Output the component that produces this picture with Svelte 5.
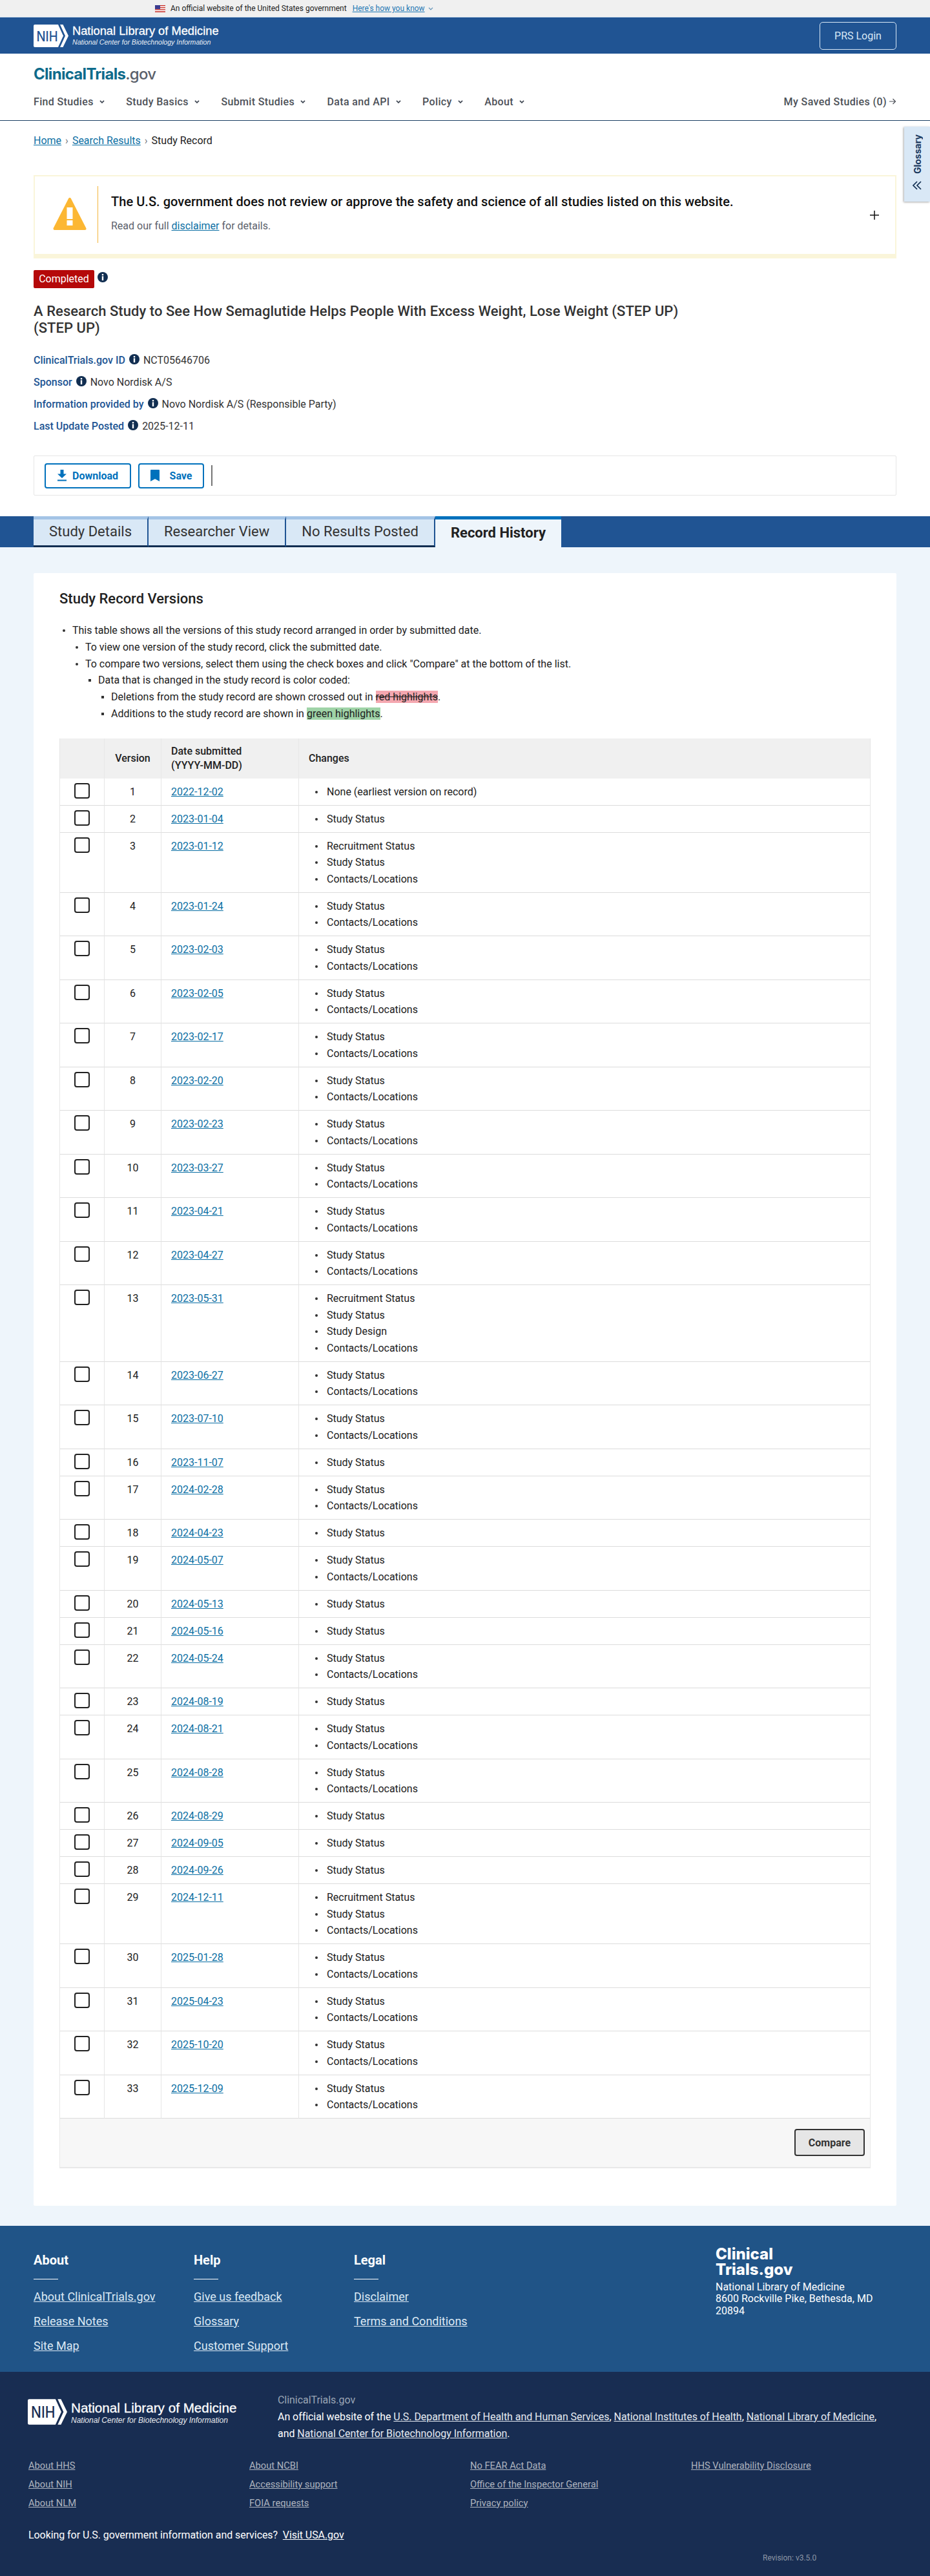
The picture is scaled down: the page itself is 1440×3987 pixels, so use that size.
<script>
  const SS = 'Study Status', CL = 'Contacts/Locations', RS = 'Recruitment Status', SD = 'Study Design';
  const rows = [
    ['2022-12-02', ['None (earliest version on record)']],
    ['2023-01-04', [SS]],
    ['2023-01-12', [RS, SS, CL]],
    ['2023-01-24', [SS, CL]],
    ['2023-02-03', [SS, CL]],
    ['2023-02-05', [SS, CL]],
    ['2023-02-17', [SS, CL]],
    ['2023-02-20', [SS, CL]],
    ['2023-02-23', [SS, CL]],
    ['2023-03-27', [SS, CL]],
    ['2023-04-21', [SS, CL]],
    ['2023-04-27', [SS, CL]],
    ['2023-05-31', [RS, SS, SD, CL]],
    ['2023-06-27', [SS, CL]],
    ['2023-07-10', [SS, CL]],
    ['2023-11-07', [SS]],
    ['2024-02-28', [SS, CL]],
    ['2024-04-23', [SS]],
    ['2024-05-07', [SS, CL]],
    ['2024-05-13', [SS]],
    ['2024-05-16', [SS]],
    ['2024-05-24', [SS, CL]],
    ['2024-08-19', [SS]],
    ['2024-08-21', [SS, CL]],
    ['2024-08-28', [SS, CL]],
    ['2024-08-29', [SS]],
    ['2024-09-05', [SS]],
    ['2024-09-26', [SS]],
    ['2024-12-11', [RS, SS, CL]],
    ['2025-01-28', [SS, CL]],
    ['2025-04-23', [SS, CL]],
    ['2025-10-20', [SS, CL]],
    ['2025-12-09', [SS, CL]]
  ];
  const nav = ['Find Studies', 'Study Basics', 'Submit Studies', 'Data and API', 'Policy', 'About'];
  const meta = [
    ['ClinicalTrials.gov ID', 'NCT05646706'],
    ['Sponsor', 'Novo Nordisk A/S'],
    ['Information provided by', 'Novo Nordisk A/S (Responsible Party)'],
    ['Last Update Posted', '2025-12-11']
  ];
  const tabs = ['Study Details', 'Researcher View', 'No Results Posted'];
  const footCols = [
    ['About', ['About ClinicalTrials.gov', 'Release Notes', 'Site Map']],
    ['Help', ['Give us feedback', 'Glossary', 'Customer Support']],
    ['Legal', ['Disclaimer', 'Terms and Conditions']]
  ];
  const legal = [
    ['About HHS', 'About NIH', 'About NLM'],
    ['About NCBI', 'Accessibility support', 'FOIA requests'],
    ['No FEAR Act Data', 'Office of the Inspector General', 'Privacy policy'],
    ['HHS Vulnerability Disclosure']
  ];
</script>

{#snippet info()}
  <svg class="info" viewBox="0 0 16 16" aria-hidden="true">
    <circle cx="8" cy="8" r="8" fill="#112e51" />
    <rect x="6.800" y="3" width="2.400" height="2.300" fill="#fff" />
    <rect x="6.800" y="6.400" width="2.400" height="6.600" fill="#fff" />
  </svg>
{/snippet}

{#snippet chev()}
  <svg class="chev" viewBox="0 0 10 6" aria-hidden="true"><path d="M1.200 1 5 4.800 8.800 1" fill="none" stroke="currentColor" stroke-width="2" /></svg>
{/snippet}

{#snippet nih(fill)}
  <svg class="nih" viewBox="0 0 54 35" aria-hidden="true">
    <path d="M2 0H38L46 17.500 38 35H2a2 2 0 0 1-2-2V2a2 2 0 0 1 2-2z" fill="#fff" />
    <path d="M41 0H45.500L54 17.500 45.500 35H41L49 17.500z" fill="#fff" />
    <text x="4.500" y="25.500" font-size="21" textLength="33" lengthAdjust="spacingAndGlyphs" fill={fill} font-family="Inter, 'Liberation Sans', sans-serif" font-weight="500">NIH</text>
  </svg>
{/snippet}

<div class="gov">
  <svg class="flag" viewBox="0 0 16 11" aria-hidden="true">
    <rect width="16" height="11" fill="#fff" />
    <rect y="0" width="16" height="1.400" fill="#c8322b" />
    <rect y="3.100" width="16" height="1.400" fill="#c8322b" />
    <rect y="6.200" width="16" height="1.400" fill="#c8322b" />
    <rect y="9.400" width="16" height="1.600" fill="#c8322b" />
    <rect width="8" height="6" fill="#3b3b8f" />
  </svg>
  <span>An official website of the United States government</span>
  <a href="#a" class="know">Here's how you know</a>
  <svg class="chev small" viewBox="0 0 10 6" aria-hidden="true"><path d="M1.200 1 5 4.800 8.800 1" fill="none" stroke="currentColor" stroke-width="1.500" /></svg>
</div>

<header class="nlm">
  <div class="brand">
    {@render nih('#205493')}
    <div class="brandtext">
      <strong>National Library of Medicine</strong>
      <em>National Center for Biotechnology Information</em>
    </div>
  </div>
  <button class="prs">PRS Login</button>
</header>

<div class="site">
  <div class="logo"><b>ClinicalTrials</b><span>.gov</span></div>
  <nav>
    {#each nav as item}
      <span class="navitem">{item}{@render chev()}</span>
    {/each}
    <span class="saved">My Saved Studies (0)
      <svg viewBox="0 0 12 12" aria-hidden="true"><path d="M1 6h9.500M6.500 2l4 4-4 4" fill="none" stroke="currentColor" stroke-width="1.200" /></svg>
    </span>
  </nav>
</div>

<aside class="glossary">
  <span>Glossary</span>
  <svg viewBox="0 0 16 16" aria-hidden="true"><path d="M8 2 2 8l6 6M14 2 8 8l6 6" fill="none" stroke="#112e51" stroke-width="1.700" /></svg>
</aside>

<section class="top">
  <div class="crumbs"><a href="#a">Home</a><i>›</i><a href="#a">Search Results</a><i>›</i><span>Study Record</span></div>

  <div class="disc">
    <div class="warn">
      <svg viewBox="0 0 52 52" aria-hidden="true">
        <path d="M26 3 49.500 49H2.500z" fill="#fcb733" stroke="#fcb733" stroke-width="4" stroke-linejoin="round" />
        <rect x="21.500" y="16" width="9" height="18" fill="#fff" />
        <rect x="21.500" y="36" width="9" height="8" fill="#fff" />
      </svg>
    </div>
    <div class="disctext">
      <h2>The U.S. government does not review or approve the safety and science of all studies listed on this website.</h2>
      <p>Read our full <a href="#a">disclaimer</a> for details.</p>
    </div>
    <svg class="plus" viewBox="0 0 16 16" aria-hidden="true"><path d="M8 1v14M1 8h14" stroke="#111" stroke-width="1.500" /></svg>
  </div>

  <div class="status"><span class="badge">Completed</span>{@render info()}</div>

  <h1>A Research Study to See How Semaglutide Helps People With Excess Weight, Lose Weight (STEP UP) (STEP UP)</h1>

  <dl>
    {#each meta as [k, v]}
      <div><dt>{k}</dt>{@render info()}<dd>{v}</dd></div>
    {/each}
  </dl>

  <div class="actions">
    <button class="act dl">
      <svg viewBox="0 0 14 18" aria-hidden="true"><path d="M4.500 0h5v6.500H14L7 13 0 6.500h4.500z" fill="#0071bc" /><rect y="15.500" width="14" height="2" fill="#0071bc" /></svg>
      Download
    </button>
    <button class="act sv">
      <svg viewBox="0 0 14 18" aria-hidden="true"><path d="M0 1a1 1 0 0 1 1-1h12a1 1 0 0 1 1 1v17l-7-3.800L0 18z" fill="#0071bc" /></svg>
      Save
    </button>
    <span class="sep"></span>
  </div>
</section>

<div class="tabs">
  {#each tabs as t}
    <span class="tab">{t}</span>
  {/each}
  <span class="tab on">Record History</span>
</div>

<main>
  <section class="panel">
    <h2 class="ph">Study Record Versions</h2>
    <ul class="l1">
      <li>This table shows all the versions of this study record arranged in order by submitted date.
        <ul class="l2">
          <li>To view one version of the study record, click the submitted date.</li>
          <li>To compare two versions, select them using the check boxes and click "Compare" at the bottom of the list.
            <ul class="l3">
              <li>Data that is changed in the study record is color coded:
                <ul class="l4">
                  <li>Deletions from the study record are shown crossed out in <s>red highlights</s>.</li>
                  <li>Additions to the study record are shown in <mark>green highlights</mark>.</li>
                </ul>
              </li>
            </ul>
          </li>
        </ul>
      </li>
    </ul>

    <div class="tw">
      <table>
        <colgroup><col class="c1" /><col class="c2" /><col class="c3" /><col /></colgroup>
        <thead>
          <tr>
            <th></th>
            <th class="ctr">Version</th>
            <th>Date submitted<br />(YYYY-MM-DD)</th>
            <th>Changes</th>
          </tr>
        </thead>
        <tbody>
          {#each rows as [date, changes], i}
            <tr>
              <td class="cb"><input type="checkbox" aria-label="Select version {i + 1}" /></td>
              <td class="ctr">{i + 1}</td>
              <td><a href="#a">{date}</a></td>
              <td class="chg"><ul>{#each changes as c}<li>{c}</li>{/each}</ul></td>
            </tr>
          {/each}
        </tbody>
      </table>
      <div class="tfoot"><button class="compare">Compare</button></div>
    </div>
  </section>
</main>

<footer>
  <div class="fblue">
    <div class="fcols">
      {#each footCols as [h, links]}
        <div class="fcol">
          <h3>{h}</h3>
          {#each links as l}<a href="#a">{l}</a>{/each}
        </div>
      {/each}
    </div>
    <div class="faddr">
      <b>Clinical<br />Trials.gov</b>
      <p>National Library of Medicine<br />8600 Rockville Pike, Bethesda, MD<br />20894</p>
    </div>
  </div>
  <div class="fdark">
    <div class="fhead">
      <div class="brand big">
        {@render nih('#182d52')}
        <div class="brandtext">
          <strong>National Library of Medicine</strong>
          <em>National Center for Biotechnology Information</em>
        </div>
      </div>
      <div class="official">
        <div class="ct">ClinicalTrials.gov</div>
        <div>An official website of the <a href="#a">U.S. Department of Health and Human Services</a>, <a href="#a">National Institutes of Health</a>, <a href="#a">National Library of Medicine</a>,<br />and <a href="#a">National Center for Biotechnology Information</a>.</div>
      </div>
    </div>
    <div class="flegal">
      {#each legal as col}
        <div>{#each col as l}<a href="#a">{l}</a>{/each}</div>
      {/each}
    </div>
    <div class="looking">Looking for U.S. government information and services?&nbsp; <a href="#a">Visit USA.gov</a></div>
    <div class="rev">Revision: v3.5.0</div>
  </div>
</footer>

<style>
  :global(body) { margin: 0; font-family: Roboto, "Liberation Sans", sans-serif; color: #212121; background: #fff; font-size: 16px; }
  a { color: #0b6fa4; }
  button { font-family: inherit; cursor: pointer; }

  .gov { height: 26px; background: #f0f0f0; border-bottom: 1px solid #cfe0ee; display: flex; align-items: center; padding-left: 240px; font-size: 12px; box-sizing: content-box; }
  .flag { width: 16px; height: 11px; margin-right: 8px; }
  .know { margin-left: 9px; color: #1f78b4; }
  .chev { width: 8px; height: 5px; margin-left: 9px; color: #3d4551; }
  .chev.small { margin-left: 5px; color: #5b8fb5; }

  .nlm { height: 56px; background: #205493; display: flex; align-items: center; justify-content: space-between; padding: 0 52px; box-sizing: border-box; }
  .brand { display: flex; align-items: center; color: #fff; }
  .nih { width: 54px; height: 35px; flex: none; }
  .brandtext { margin-left: 6px; display: flex; flex-direction: column; font-family: "Liberation Sans", Arial, sans-serif; }
  .brandtext strong { font-weight: 400; font-size: 18.300px; line-height: 20px; -webkit-text-stroke: 0.3px #fff; white-space: nowrap; }
  .brandtext em { font-size: 10.600px; line-height: 14px; opacity: 0.9; white-space: nowrap; }
  .prs { width: 119px; height: 43px; background: transparent; color: #d9e8f6; border: 1px solid #d9e8f6; border-radius: 5px; font-size: 16px; }

  .site { height: 103px; border-bottom: 1px solid #1b3f63; padding: 0 52px; box-sizing: content-box; }
  .logo { padding-top: 17px; height: 30px; font-family: Inter, sans-serif; font-size: 24px; line-height: 30px; letter-spacing: -0.7px; }
  .logo b { color: #0e6b8b; font-weight: 700; }
  .logo span { color: #5b616b; font-weight: 500; }
  nav { display: flex; align-items: center; height: 24px; margin-top: 15px; font-weight: 500; color: #4d5158; letter-spacing: 0.35px; }
  .navitem { margin-right: 33.500px; display: flex; align-items: center; white-space: nowrap; }
  .saved { margin-left: auto; font-weight: 500; font-size: 16px; letter-spacing: 0.4px; display: flex; align-items: center; white-space: nowrap; }
  .saved svg { width: 12px; height: 12px; margin-left: 3px; }

  .glossary { position: absolute; left: 1400px; top: 196px; width: 40px; height: 116px; background: #d9e8f6; box-shadow: -1px 1px 3px rgba(0,0,0,.35); display: flex; flex-direction: column; align-items: center; padding-top: 12px; box-sizing: border-box; }
  .glossary span { writing-mode: vertical-rl; transform: rotate(180deg); font-family: Inter, sans-serif; font-weight: 700; font-size: 14px; color: #1b3a5f; }
  .glossary svg { width: 16px; height: 16px; margin-top: 10px; }

  .top { padding: 19px 52px 0; }
  .crumbs { height: 24px; line-height: 24px; display: flex; }
  .crumbs i { font-style: normal; color: #71767a; margin: 0 6px; }
  .disc { margin-top: 41px; height: 129px; box-sizing: border-box; border: 2px solid #faf5da; border-bottom-width: 7px; display: flex; position: relative; padding-top: 15px; }
  .warn { width: 97px; height: 88px; border-right: 1px solid #f4b63c; box-sizing: content-box; flex: none; }
  .warn svg { width: 52px; height: 52px; margin: 17px 0 0 28px; display: block; }
  .disctext { margin-left: 20px; }
  .disctext h2 { margin: 10px 0 0; font-size: 20px; line-height: 28px; font-weight: 500; color: #111; letter-spacing: 0.05px; }
  .disctext p { margin: 12px 0 0; line-height: 24px; color: #5b616b; }
  .plus { position: absolute; right: 24px; top: 52px; width: 16px; height: 16px; }

  .status { margin-top: 18px; display: flex; align-items: flex-start; gap: 5px; height: 28px; }
  .badge { background: #b50909; color: #fff; height: 28px; width: 94px; line-height: 28px; text-align: center; border-radius: 2px; font-size: 16px; }
  .info { width: 16px; height: 16px; flex: none; margin-top: 3px; }
  h1 { margin: 23px 0 0; font-size: 22px; line-height: 26px; font-weight: 500; width: 1010px; color: #333; letter-spacing: 0.05px; }
  dl { margin: 24px 0 0; }
  dl div { display: flex; align-items: center; height: 24px; margin-bottom: 10px; }
  dl div:last-child { margin-bottom: 0; }
  dt { font-weight: 500; color: #205493; margin-right: 6px; }
  dl .info { margin-top: -2px; }
  dd { margin: 0 0 0 6px; color: #333; }

  .actions { margin-top: 34px; height: 62px; box-sizing: border-box; border: 1px solid #e6e6e6; border-radius: 2px; display: flex; align-items: center; padding-left: 16px; gap: 11px; }
  .act { height: 39px; background: #fff; border: 2px solid #0071bc; border-radius: 4px; color: #0071bc; font-weight: 700; font-size: 16px; display: flex; align-items: center; justify-content: center; box-sizing: border-box; padding: 0; }
  .act svg { width: 14px; height: 18px; }
  .dl { width: 134px; gap: 9px; }
  .sv { width: 102px; gap: 16px; }
  .sep { width: 2px; height: 32px; background: #757575; }

  .tabs { margin-top: 32px; height: 48px; background: #205493; padding-left: 52px; display: flex; }
  .tab { box-sizing: border-box; height: 48px; background: #d9e8f6; border-top: 5px solid #a4c4e6; border-bottom: 3px solid #112e51; border-right: 2px solid #205493; padding: 0 24px; font-size: 22px; line-height: 38px; color: #333; white-space: nowrap; }
  .tab.on { background: #eef5fb; border-top-color: #0071bc; border-bottom: 0; border-right: 0; font-weight: 700; color: #212121; line-height: 41px; padding: 0 24px; }

  main { background: #eef5fb; padding: 40px 52px 31.400px; }
  .panel { background: #fff; padding: 26px 40px 57.600px; border-radius: 2px; }
  .ph { margin: 0; font-size: 22px; line-height: 28px; font-weight: 500; color: #212121; }
  ul { margin: 0; padding: 0; list-style: none; }
  li { position: relative; }
  .l1 { margin-top: 22px; line-height: 25.800px; }
  .l1 li { padding-left: 20px; }
  .l1 li::before, .chg li::before { content: ""; position: absolute; left: 5px; top: 11px; width: 4px; height: 4px; background: #333; border-radius: 50%; }
  .l3 li::before, .l4 li::before { border-radius: 0 !important; }
  s { background: #f4a7b0; }
  mark { background: #9fd3a7; color: inherit; }

  .tw { margin-top: 25.200px; }
  table { width: 1256px; table-layout: fixed; border-collapse: separate; border-spacing: 0; border-left: 1px solid #e6e6e6; border-right: 1px solid #e6e6e6; box-sizing: border-box; }
  .c1 { width: 69px; } .c2 { width: 88px; } .c3 { width: 213px; }
  th { background: #f0f0f0; height: 62px; box-sizing: border-box; text-align: left; padding: 0 15px; font-weight: 500; line-height: 22px; border-right: 1px solid #e8e8e8; font-size: 16px; }
  th:last-child, td:last-child { border-right: 0; }
  td { vertical-align: top; padding: 8px 15px 7.500px; border-bottom: 1px solid #dcdcdc; border-right: 1px solid #e6e6e6; line-height: 25.500px; }
  th.ctr, td.ctr { text-align: center; padding-left: 0; padding-right: 0; }
  td.cb { padding: 7px 0 0 22px; }
  input[type="checkbox"] { appearance: none; -webkit-appearance: none; display: block; width: 24px; height: 24px; margin: 0; border: 2px solid #212121; border-radius: 4px; background: #fff; box-sizing: border-box; }
  .chg ul { padding-left: 28px; }
  .chg li::before { left: -18px; top: 11px; }
  .tfoot { height: 76.500px; box-sizing: border-box; width: 1256px; background: #f7f7f7; border: 1px solid #e8e8e8; border-top: 0; border-bottom-width: 2px; display: flex; justify-content: flex-end; padding: 16px 8px 0 0; }
  .compare { width: 109px; height: 42px; background: #e6e6e6; border: 2px solid #333; border-radius: 4px; color: #333; font-weight: 700; font-size: 16px; padding: 0; }

  .fblue { height: 226px; box-sizing: border-box; background: #205487; padding: 39px 52px 0; display: flex; color: #fff; }
  .fcols { display: flex; width: 1056px; }
  .fcol { width: 248px; display: flex; flex-direction: column; }
  .fcol h3 { margin: 0; font-size: 20px; line-height: 28px; font-weight: 700; }
  .fcol h3::after { content: ""; display: block; width: 38px; height: 1px; background: #fff; margin-top: 15px; }
  .fcol a { color: #dce9f4; font-size: 18px; line-height: 24px; margin-top: 14px; width: max-content; }
  .fcol h3 + a { margin-top: 15px; }
  .faddr { margin-top: -7px; }
  .faddr b { display: block; font-family: Inter, sans-serif; font-weight: 800; font-size: 24px; line-height: 24px; }
  .faddr p { margin: 6px 0 0; font-size: 16px; line-height: 18.500px; }

  .fdark { height: 316px; box-sizing: border-box; background: #182d52; padding: 31px 44px 0; color: #fff; }
  .fhead { display: flex; }
  .big { margin: 11px 0 0 -1px; height: 40px; align-items: flex-start; width: 323px; }
  .big .nih { width: 61px; height: 40px; }
  .big .brandtext { margin-left: 6px; }
  .big strong { font-size: 20.700px; line-height: 24px; margin-top: 2px; }
  .big em { font-size: 12px; line-height: 14px; }
  .official { margin-left: 64px; line-height: 26px; font-size: 16px; letter-spacing: -0.05px; white-space: nowrap; }
  .official a { color: #e4e9f0; }
  .ct { color: #9aa5b5; }
  .flegal { display: grid; grid-template-columns: repeat(4, 342px); margin-top: 22px; }
  .flegal div { display: flex; flex-direction: column; }
  .flegal a { color: #aeb4bf; font-size: 14.700px; line-height: 29px; width: max-content; }
  .looking { margin-top: 23px; line-height: 24px; letter-spacing: -0.07px; }
  .looking a { color: #fff; }
  .rev { margin: 17px 0 0 1137px; font-size: 12px; line-height: 12px; color: #8e97a6; }
</style>
